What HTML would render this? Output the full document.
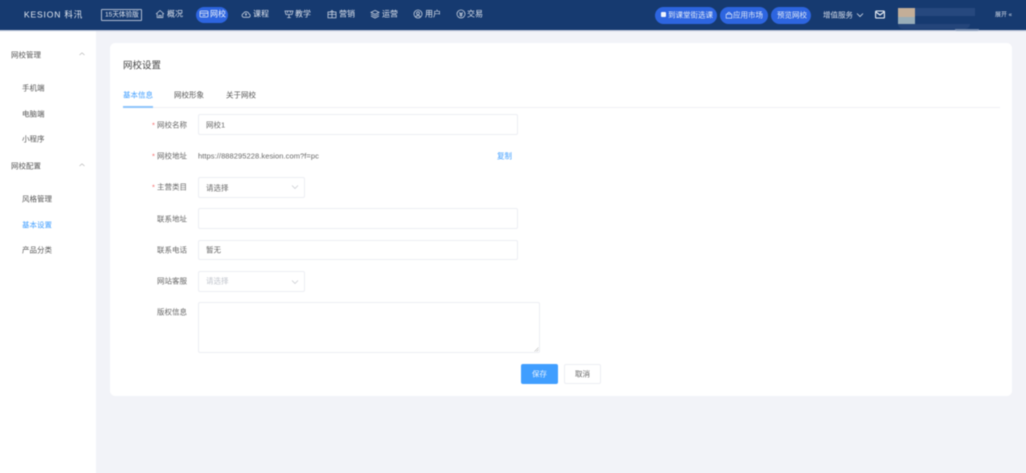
<!DOCTYPE html>
<html lang="zh">
<head>
<meta charset="utf-8">
<title>网校设置</title>
<style>
html,body{margin:0;padding:0;width:1026px;height:473px;overflow:hidden;background:#f2f3f8}
#clip{position:absolute;left:0;top:0;width:1026px;height:473px;overflow:hidden}
#root{position:absolute;left:-10px;top:-10px;width:1046px;height:493px;overflow:hidden;background:#f2f3f8;font-family:"Liberation Sans","Noto Sans CJK SC",sans-serif;font-size:7.5px;color:#555;filter:blur(.42px)}
#root div,#root svg{position:absolute}
#in{left:10px;top:10px;width:1026px;height:473px}
.t{white-space:nowrap;line-height:10px;height:10px;transform:translateY(.7px)}
.hdr{left:-10px;top:-10px;width:1046px;height:40px;background:#163a70;box-shadow:0 1px 1px #b4bfd4}
.n{color:#dde3ed;font-size:8px;top:9px}
.ic{top:9px;width:10px;height:10px;fill:none;stroke:#c6d0df;stroke-width:.8}
.pill{background:#2d65e0;border-radius:9px;height:17px;top:7px}
.pt{color:#e4ebf8;font-size:7.5px;top:10px}
.side{left:-10px;top:30px;width:106px;height:453px;background:#fff}
.card{left:110px;top:43px;width:902px;height:353px;background:#fff;border-radius:5px}
.box{box-sizing:border-box;border:1px solid #eceef3;border-radius:2px;background:#fff;left:198px}
.lb{color:#666;width:60px;left:127px;text-align:right}
.req:before{content:"* ";color:#f56c6c}
.val{left:206px;color:#666}
</style>
</head>
<body>
<div id="clip"><div id="root"><div id="in">
<div class="side"></div>
<div class="hdr"></div>

<div class="t" style="left:24px;top:9px;color:#e6ebf3;font-size:8.5px;letter-spacing:.85px;line-height:11px;height:11px">KESION 科汛</div>
<div style="left:101px;top:9px;width:41px;height:12px;box-sizing:border-box;border:1px solid #aebbd0;border-radius:1px"></div>
<div class="t" style="left:105px;top:9.5px;color:#e0e6f0;font-size:6.6px">15天体验版</div>

<svg class="ic" style="left:155px" viewBox="0 0 10 10"><path d="M1 5 5 1.5 9 5M2.2 4.5V8.6H7.8V4.5M4 8.6V6.4H6V8.6"/></svg>
<div class="t n" style="left:167px">概况</div>
<div class="pill" style="left:196px;width:32px;height:16px;top:7px"></div>
<svg class="ic" style="left:199px;stroke:#e0e8f8" viewBox="0 0 10 10"><rect x="1" y="2" width="8" height="6" rx="1"/><path d="M1 4.2H9M3.5 6.2H6.5"/></svg>
<div class="t n" style="left:210px;color:#eef3fc">网校</div>
<svg class="ic" style="left:241px" viewBox="0 0 10 10"><path d="M2.5 8.3H7.8A1.7 1.7 0 0 0 8 5 3 3 0 0 0 2.4 4.5 2 2 0 0 0 2.5 8.3ZM5 7V4.6M4 5.5 5 4.6 6 5.5"/></svg>
<div class="t n" style="left:253px">课程</div>
<svg class="ic" style="left:284px" viewBox="0 0 10 10"><path d="M1 2H9L8 5.5H2ZM5 5.5V9M3.2 8.6H6.8M3.5 2V4M6.5 2V4"/></svg>
<div class="t n" style="left:295px">教学</div>
<svg class="ic" style="left:327px" viewBox="0 0 10 10"><rect x="1" y="3" width="8" height="5.8"/><path d="M1 5.4H9M5 3V8.8M3.4 3 5 1.4 6.6 3"/></svg>
<div class="t n" style="left:339px">营销</div>
<svg class="ic" style="left:370px" viewBox="0 0 10 10"><path d="M5 1.4 9 3.4 5 5.4 1 3.4ZM1 5.2 5 7.2 9 5.2M1 7 5 9 9 7"/></svg>
<div class="t n" style="left:382px">运营</div>
<svg class="ic" style="left:413px" viewBox="0 0 10 10"><circle cx="5" cy="5" r="4"/><circle cx="5" cy="4.2" r="1.4"/><path d="M2.8 7.6C3.4 6.4 6.6 6.4 7.2 7.6"/></svg>
<div class="t n" style="left:425px">用户</div>
<svg class="ic" style="left:456px" viewBox="0 0 10 10"><circle cx="5" cy="5" r="4"/><path d="M3.4 3.3 5 5 6.6 3.3M3.4 5H6.6M3.4 6.4H6.6M5 5V8"/></svg>
<div class="t n" style="left:467px">交易</div>

<div class="pill" style="left:655px;width:62px"></div>
<div style="left:661px;top:12px;width:5px;height:5px;background:#f0f4fc;border-radius:1px"></div>
<div class="t pt" style="left:668px">到课堂街选课</div>
<div class="pill" style="left:720px;width:48px"></div>
<svg class="ic" style="left:725px;top:11px;width:8px;height:8px;stroke:#f0f4fc" viewBox="0 0 10 10"><path d="M1.5 4H8.5V9H1.5ZM3.2 4A1.8 2.4 0 0 1 6.8 4"/></svg>
<div class="t pt" style="left:733px">应用市场</div>
<div class="pill" style="left:771px;width:40px"></div>
<div class="t pt" style="left:777px">预览网校</div>

<div class="t" style="left:823px;top:10px;color:#d8dfeb;font-size:7.5px">增值服务</div>
<svg class="ic" style="left:856px;top:11px;width:8px;height:8px;stroke:#d8dfeb" viewBox="0 0 8 8"><path d="M1 2.5 4 5.5 7 2.5"/></svg>
<svg class="ic" style="left:875px;top:10px;width:10px;height:9px;stroke:#eef2f8;stroke-width:1.1" viewBox="0 0 10 9"><rect x=".6" y="1" width="8.8" height="7" rx=".8"/><path d="M1 2 5 5 9 2"/></svg>

<div style="left:898px;top:8px;width:17px;height:9px;background:#c3ae98"></div>
<div style="left:898px;top:17px;width:17px;height:7px;background:#98adb8"></div>
<div style="left:915px;top:8px;width:60px;height:8px;background:#2d4f84;opacity:.7"></div>
<div style="left:898px;top:24px;width:72px;height:5px;background:#24457a;border-radius:0 0 20px 20px"></div>
<div style="left:955px;top:29px;width:24px;height:2px;background:#8a9dba;border-radius:0 0 10px 10px;opacity:.7"></div>
<div class="t" style="left:995px;top:10px;color:#d8dfeb;font-size:6px">展开 «</div>

<div class="t" style="left:11px;top:50px">网校管理</div>
<svg style="left:78px;top:51px;width:8px;height:6px;fill:none;stroke:#bbb;stroke-width:.7" viewBox="0 0 8 6"><path d="M1.5 4 4 1.8 6.5 4"/></svg>
<div class="t" style="left:22px;top:83px">手机端</div>
<div class="t" style="left:22px;top:109px">电脑端</div>
<div class="t" style="left:22px;top:134px">小程序</div>
<div class="t" style="left:11px;top:161px">网校配置</div>
<svg style="left:78px;top:162px;width:8px;height:6px;fill:none;stroke:#bbb;stroke-width:.7" viewBox="0 0 8 6"><path d="M1.5 4 4 1.8 6.5 4"/></svg>
<div class="t" style="left:22px;top:194px">风格管理</div>
<div class="t" style="left:22px;top:220px;color:#409eff">基本设置</div>
<div class="t" style="left:22px;top:245px">产品分类</div>

<div class="card"></div>
<div class="t" style="left:123px;top:61px;font-size:9.5px;color:#444">网校设置</div>

<div class="t" style="left:123px;top:90px;color:#409eff">基本信息</div>
<div class="t" style="left:174px;top:90px">网校形象</div>
<div class="t" style="left:226px;top:90px">关于网校</div>
<div style="left:123px;top:107px;width:877px;height:1px;background:#eff0f4"></div>
<div style="left:123px;top:106px;width:30px;height:2px;background:#8cc4fb"></div>

<div class="t lb req" style="top:120px">网校名称</div>
<div class="box" style="top:114px;width:320px;height:21px"></div>
<div class="t val" style="top:120px">网校1</div>

<div class="t lb req" style="top:151px">网校地址</div>
<div class="t" style="left:198px;top:151px;color:#666;letter-spacing:.07px">https://888295228.kesion.com?f=pc</div>
<div class="t" style="left:497px;top:151px;color:#409eff">复制</div>

<div class="t lb req" style="top:182px">主营类目</div>
<div class="box" style="top:177px;width:107px;height:21px"></div>
<div class="t val" style="top:183px">请选择</div>
<svg style="left:291px;top:184px;width:8px;height:6px;fill:none;stroke:#c4c7cc;stroke-width:.7" viewBox="0 0 8 6"><path d="M1 1.5 4 4.5 7 1.5"/></svg>

<div class="t lb" style="top:214px">联系地址</div>
<div class="box" style="top:208px;width:320px;height:21px"></div>

<div class="t lb" style="top:245px">联系电话</div>
<div class="box" style="top:240px;width:320px;height:20px"></div>
<div class="t val" style="top:245px">暂无</div>

<div class="t lb" style="top:276px">网站客服</div>
<div class="box" style="top:271px;width:107px;height:21px"></div>
<div class="t val" style="top:276px;color:#c0c4cc">请选择</div>
<svg style="left:291px;top:279px;width:8px;height:6px;fill:none;stroke:#c4c7cc;stroke-width:.7" viewBox="0 0 8 6"><path d="M1 1.5 4 4.5 7 1.5"/></svg>

<div class="t lb" style="top:307px">版权信息</div>
<div class="box" style="top:302px;width:342px;height:51px"></div>
<svg style="left:534px;top:347px;width:5px;height:5px;fill:none;stroke:#999;stroke-width:.5" viewBox="0 0 5 5"><path d="M.5 4.5 4.5.5M2.5 4.5 4.5 2.5"/></svg>

<div style="left:521px;top:364px;width:37px;height:20px;background:#409eff;border-radius:2px"></div>
<div class="t" style="left:532px;top:369px;color:#eaf4ff">保存</div>
<div class="box" style="left:564px;top:364px;width:37px;height:20px"></div>
<div class="t" style="left:575px;top:369px;color:#666">取消</div>
</div></div></div>
</body>
</html>
